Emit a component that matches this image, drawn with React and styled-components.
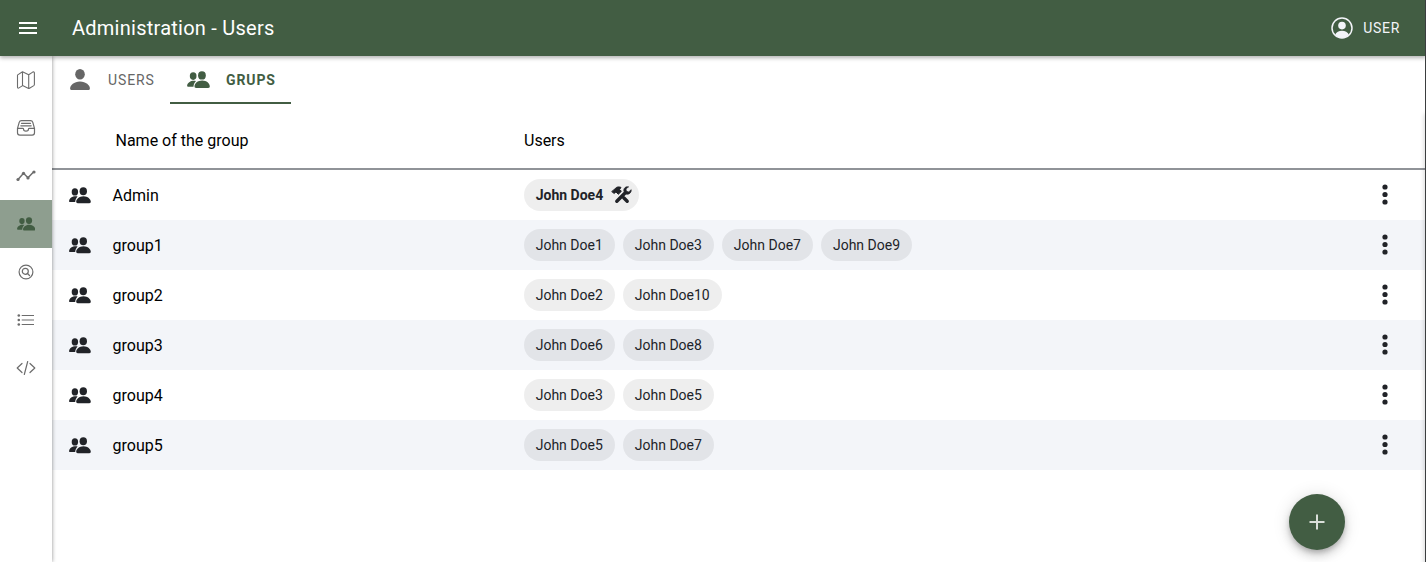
import React from "react";
import styled, { createGlobalStyle, css } from "styled-components";

const GlobalStyle = createGlobalStyle`
  *, *::before, *::after { box-sizing: border-box; }
  body { margin: 0; background: #fff; color: #000; font-family: Roboto, sans-serif; font-size: 16px; overflow: hidden; }
  button { font: inherit; color: inherit; border: 0; padding: 0; margin: 0; background: none; cursor: pointer; }
  svg { display: block; flex: none; }
`;

const Page = styled.div`
  position: relative;
  height: 562px;
  display: flex;
  flex-direction: column;
  overflow: hidden;
`;
const Header = styled.header`
  height: 56px;
  flex: none;
  display: flex;
  align-items: center;
  padding: 0 26px 0 16px;
  background: #425d43;
  color: #fff;
  box-shadow: 0 2px 4px rgba(0, 0, 0, 0.3);
  z-index: 2;
`;
const Title = styled.h1`
  margin: 0 auto 0 32px;
  font-size: 20px;
  font-weight: 400;
  line-height: 28px;
  letter-spacing: 0.25px;
`;
const UserButton = styled.button`
  display: flex;
  align-items: center;
  gap: 10px;
  color: #f3f4f9;
  font-size: 14px;
  letter-spacing: 0.7px;
`;
const Body = styled.div`
  flex: 1;
  display: flex;
  min-height: 0;
`;
const Sidebar = styled.nav`
  width: 52px;
  flex: none;
  background: #fff;
  box-shadow: 0 0 4px rgba(0, 0, 0, 0.45);
  z-index: 1;
`;
const NavItem = styled.button`
  width: 52px;
  height: 48px;
  display: flex;
  align-items: center;
  justify-content: center;
  color: ${(p) => (p.$active ? "#425d43" : "#6c6c6c")};
  background: ${(p) => (p.$active ? "#8e9e8f" : "transparent")};
`;
const Content = styled.main`
  flex: 1;
  min-width: 0;
`;
const Tabs = styled.div`
  height: 48px;
  display: flex;
`;
const Tab = styled.button`
  width: ${(p) => (p.$active ? 121 : 118)}px;
  height: 48px;
  display: flex;
  align-items: center;
  padding: 2px 0 0 ${(p) => (p.$active ? 17 : 18)}px;
  gap: ${(p) => (p.$active ? 16 : 18)}px;
  color: #666;
  font-size: 14px;
  letter-spacing: 0.9px;
  border-bottom: 2px solid transparent;
  ${(p) =>
    p.$active &&
    css`
      color: #425d43;
      font-weight: 700;
      border-color: #425d43;
    `}
`;
const gridColumns = css`
  display: grid;
  grid-template-columns: 60.5px 411.5px 1fr 82px;
  align-items: center;
`;
const HeadRow = styled.div`
  ${gridColumns}
  height: 66px;
  padding-top: 8px;
  border-bottom: 2px solid #909398;
`;
const HeadCell = styled.div`
  padding-left: ${(p) => p.$indent || 0}px;
`;
const Row = styled.div`
  ${gridColumns}
  height: 50px;
  background: ${(p) => (p.$striped ? "#f3f5f9" : "#fff")};
`;
const IconCell = styled.div`
  padding-left: 16.7px;
  color: #212328;
`;
const Chips = styled.div`
  display: flex;
  gap: 8px;
`;
const Chip = styled.span`
  height: 32px;
  display: inline-flex;
  align-items: center;
  gap: 7.5px;
  padding: 0 ${(p) => (p.$admin ? 7 : 12.3)}px 0 11.7px;
  border-radius: 16px;
  background: rgba(0, 0, 0, 0.067);
  color: #212328;
  font-size: 14px;
  font-weight: ${(p) => (p.$admin ? 700 : 400)};
`;
const MenuButton = styled.button`
  width: 24px;
  height: 24px;
  margin-left: 29px;
  color: #212328;
`;
const AddButton = styled.button`
  position: absolute;
  left: 1289px;
  top: 494px;
  width: 56px;
  height: 56px;
  display: flex;
  align-items: center;
  justify-content: center;
  border-radius: 50%;
  background: #425d43;
  box-shadow: 0 3px 5px -1px rgba(0, 0, 0, 0.2), 0 6px 10px rgba(0, 0, 0, 0.14), 0 1px 18px rgba(0, 0, 0, 0.12);
`;
const EdgeLine = styled.div`
  position: absolute;
  right: 0;
  top: 0;
  width: 1px;
  height: 100%;
  background: #3b3e3f;
  z-index: 3;
`;
const EdgeShade = styled.div`
  position: absolute;
  right: 0;
  top: 114px;
  width: 1px;
  height: 100%;
  box-shadow: 0 0 4px rgba(0, 0, 0, 0.5);
`;

const PeopleIcon = ({ w = 22 }) => (
  <svg width={w} height={(w * 17) / 22} viewBox="0 0 22 17" fill="currentColor">
    <ellipse cx="5.9" cy="4.9" rx="3.2" ry="3.6" />
    <path d="M8.6 9.6C5 8.5.2 10.6.1 14.2c0 .5.3.9.9.9h5.2c.1-2.2 1-4.1 2.400-5.500Z" />
    <ellipse cx="14.3" cy="4.2" rx="3.700" ry="4" />
    <path d="M14.500 9.200c-4.300 0-7.300 2.900-7.300 5.600 0 .9.500 1.400 1.500 1.400h11.600c1 0 1.500-.5 1.500-1.400 0-2.700-3-5.600-7.300-5.600Z" />
  </svg>
);
const PersonIcon = () => (
  <svg width="20" height="22" viewBox="0 0 20 22" fill="currentColor">
    <ellipse cx="10" cy="5.300" rx="4.800" ry="5.200" />
    <path d="M10 12.400c-6 0-9.900 3.900-9.900 7 0 1.100.7 1.700 2 1.700h15.800c1.300 0 2-.6 2-1.700 0-3.100-3.900-7-9.900-7Z" />
  </svg>
);
const MapIcon = () => (
  <svg width="20" height="20" viewBox="0 0 20 20" fill="none" stroke="currentColor" strokeWidth="1.100" strokeLinejoin="round">
    <path d="M1.700 4.900 6.500 1.700l6.200 3 4-2.600c.9-.5 1.700-.2 1.700.8v11.600c0 .5-.2.800-.6 1.100l-4.300 2.700c-.5.300-.9.300-1.400 0l-5.500-2.700-3.600 2.300c-.9.600-1.500.2-1.500-.8V5.600c0-.3 0-.5.200-.7ZM6.500 1.700v13.900M12.700 4.700v13.900" />
  </svg>
);
const TrayIcon = () => (
  <svg width="20" height="18" viewBox="0 0 20 18" fill="none" stroke="currentColor" strokeWidth="1.200" strokeLinecap="round" strokeLinejoin="round">
    <path d="M1.500 9.300 3.200 3.400C3.600 2 4.300 1.600 5.500 1.600h9c1.200 0 1.900.4 2.300 1.800l1.700 5.900v4.400c0 1.600-.8 2.400-2.400 2.400H3.900c-1.600 0-2.400-.8-2.400-2.400V9.300h5.200c.6 0 .8.300.8.800 0 1.300 1 2.100 2.500 2.100s2.500-.8 2.500-2.100c0-.5.2-.8.8-.8h5.200M5.500 4.300h9M4.800 6.800h10.400" />
  </svg>
);
const ChartIcon = () => (
  <svg width="20" height="14" viewBox="0 0 20 14" fill="currentColor" stroke="currentColor">
    <path d="m2 10.400 5.500-6.100 4.500 4.500 6-6.300" fill="none" strokeWidth="1.500" />
    <g stroke="none">
      <circle cx="2" cy="10.500" r="1.600" />
      <circle cx="7.500" cy="4.300" r="1.600" />
      <circle cx="12" cy="8.900" r="1.600" />
      <circle cx="18" cy="3" r="1.600" />
    </g>
  </svg>
);
const SearchIcon = () => (
  <svg width="16" height="16" viewBox="0 0 16 16" fill="none" stroke="currentColor" strokeWidth="1.200" strokeLinecap="round">
    <circle cx="8" cy="8" r="6.900" />
    <circle cx="7.300" cy="7.300" r="3" />
    <path d="m9.500 9.500 2 2" />
  </svg>
);
const ListIcon = () => (
  <svg width="18" height="14" viewBox="0 0 18 14" fill="currentColor" stroke="currentColor">
    <path d="M4.700 2.500H17M4.700 7H17M4.700 11.500H17" strokeWidth="1.100" />
    <g stroke="none">
      <circle cx="1.800" cy="2.500" r="1.300" />
      <circle cx="1.800" cy="7" r="1.300" />
      <circle cx="1.800" cy="11.500" r="1.300" />
    </g>
  </svg>
);
const CodeIcon = () => (
  <svg width="20" height="16" viewBox="0 0 20 16" fill="none" stroke="currentColor" strokeWidth="1.200" strokeLinecap="round" strokeLinejoin="round">
    <path d="M6 3.500 1.200 8 6 12.500M14 3.500 18.800 8 14 12.500M11.700 1.500 8.300 14.500" />
  </svg>
);
const MenuIcon = () => (
  <svg width="24" height="24" viewBox="0 0 24 24" fill="currentColor">
    <path d="M3 18h18v-2H3v2zm0-5h18v-2H3v2zm0-7v2h18V6H3z" />
  </svg>
);
const AccountIcon = () => (
  <svg width="22" height="22" viewBox="0 0 22 22" fill="none">
    <circle cx="11" cy="11" r="10" stroke="currentColor" strokeWidth="1.500" />
    <circle cx="11" cy="8.600" r="3.800" fill="currentColor" />
    <path d="M4.200 17.500c1-2.400 3.700-3.800 6.800-3.800s5.800 1.400 6.800 3.800c-1.700 2.200-4.100 3.500-6.800 3.500s-5.100-1.300-6.800-3.500Z" fill="currentColor" />
  </svg>
);
/* Hammer (head top left) crossed with a wrench (jaw top right) */
const ToolsIcon = () => (
  <svg width="21" height="18" viewBox="0 0 21 18" fill="none" stroke="currentColor" strokeLinecap="round" strokeLinejoin="round">
    <path d="M1 5.800 3.300 7.500 4.900 5.900 7.300 8.300 10.400 5.300 8.600 3.500 10 1.400C8 .6 5.900.8 4.500 2.200L2.700 4Z" fill="currentColor" strokeWidth="1" />
    <path d="M12.700 11.700 16.200 15.200" strokeWidth="3.400" />
    <path d="M5.800 15.200 14.300 6.700" strokeWidth="3.400" />
    <path d="M17.300.8C14.600.2 12.300 2.400 12.900 5.200L15.400 8.200C18.300 8.600 20.500 6.500 20.200 3.700L17.800 5.900 15.400 5.300 15 3.100Z" fill="currentColor" strokeWidth=".7" />
  </svg>
);
const DotsIcon = () => (
  <svg width="24" height="24" viewBox="0 0 24 24" fill="currentColor">
    <circle cx="12" cy="4" r="2.600" />
    <circle cx="12" cy="11.500" r="2.600" />
    <circle cx="12" cy="19" r="2.600" />
  </svg>
);
const PlusIcon = () => (
  <svg width="16" height="16" viewBox="0 0 16 16" stroke="#d9dfd9" strokeWidth="2">
    <path d="M8 .5v15M.5 8h15" />
  </svg>
);

const navItems = [
  { name: "map", icon: <MapIcon /> },
  { name: "inbox", icon: <TrayIcon /> },
  { name: "charts", icon: <ChartIcon /> },
  { name: "people", icon: <PeopleIcon w={18.5} />, active: true },
  { name: "search", icon: <SearchIcon /> },
  { name: "list", icon: <ListIcon /> },
  { name: "code", icon: <CodeIcon /> },
];
const groups = [
  { name: "Admin", users: ["John Doe4"], admin: true },
  { name: "group1", users: ["John Doe1", "John Doe3", "John Doe7", "John Doe9"] },
  { name: "group2", users: ["John Doe2", "John Doe10"] },
  { name: "group3", users: ["John Doe6", "John Doe8"] },
  { name: "group4", users: ["John Doe3", "John Doe5"] },
  { name: "group5", users: ["John Doe5", "John Doe7"] },
];

export default function App() {
  return (
    <>
      <GlobalStyle />
      <Page>
        <Header>
          <button><MenuIcon /></button>
          <Title>Administration - Users</Title>
          <UserButton><AccountIcon />USER</UserButton>
        </Header>
        <Body>
          <Sidebar>
            {navItems.map((item) => (
              <NavItem key={item.name} $active={item.active}>{item.icon}</NavItem>
            ))}
          </Sidebar>
          <Content>
            <Tabs>
              <Tab><PersonIcon />USERS</Tab>
              <Tab $active><PeopleIcon w={23} />GRUPS</Tab>
            </Tabs>
            <HeadRow>
              <span />
              <HeadCell $indent={3}>Name of the group</HeadCell>
              <HeadCell>Users</HeadCell>
            </HeadRow>
            {groups.map((group, i) => (
              <Row key={group.name} $striped={i % 2 === 1}>
                <IconCell><PeopleIcon /></IconCell>
                <span>{group.name}</span>
                <Chips>
                  {group.users.map((user) => (
                    <Chip key={user} $admin={group.admin}>
                      {user}
                      {group.admin && <ToolsIcon />}
                    </Chip>
                  ))}
                </Chips>
                <MenuButton><DotsIcon /></MenuButton>
              </Row>
            ))}
          </Content>
        </Body>
        <AddButton><PlusIcon /></AddButton>
        <EdgeShade />
        <EdgeLine />
      </Page>
    </>
  );
}
